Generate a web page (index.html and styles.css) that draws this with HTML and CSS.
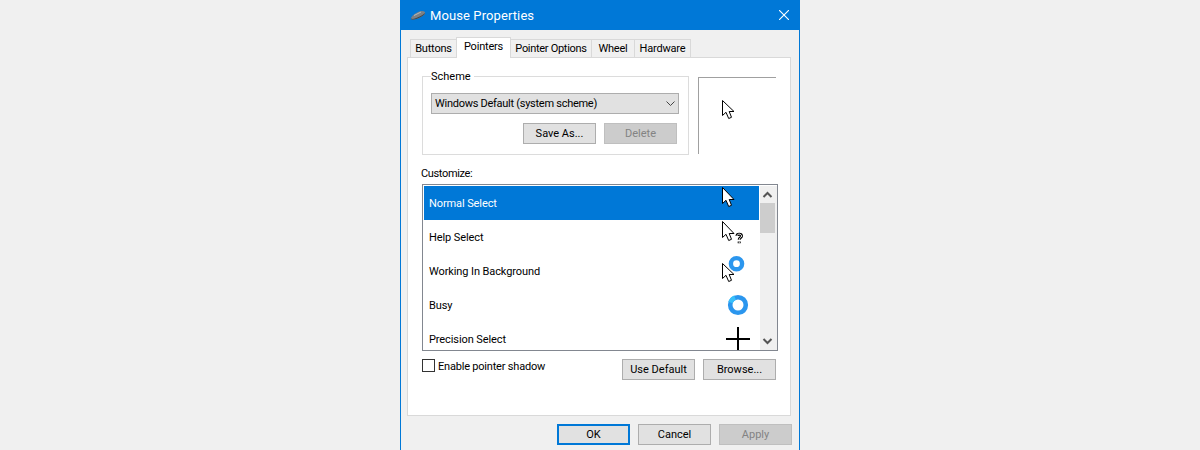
FILE: index.html
```html
<!DOCTYPE html>
<html lang="en">
<head>
<meta charset="utf-8">
<title>Mouse Properties</title>
<link rel="stylesheet" href="styles.css">
</head>
<body>
<div class="window">
  <header class="titlebar">
    <svg class="app-icon" width="16" height="12" viewBox="0 0 16 12"><path d="M1 9.500C1 7 8 2 12 2c2.500 0 3.500 1 3 2.500C14.500 6.500 7 10.500 3.500 10.500 2 10.500 1 10.500 1 9.500Z" fill="#7c8185"/><path d="M1 9.500c1 .5 2.500.5 4 0 4-1.500 8-3.500 10-5.500-.2 2.200-7.500 6.500-11.500 6.500C2 10.500 1 10.500 1 9.500Z" fill="#3f4345"/><path d="M4 6.500 11 3" stroke="#b5b9bc" fill="none"/></svg>
    <span class="title">Mouse Properties</span>
    <svg class="close" width="10" height="10" viewBox="0 0 10 10"><path d="M0 0l10 10M10 0L0 10" stroke="#fff" stroke-width="1.100" fill="none"/></svg>
  </header>
  <div class="content">
    <nav class="tabs">
      <span class="tab tab-buttons">Buttons</span>
      <span class="tab tab-active">Pointers</span>
      <span class="tab tab-options">Pointer Options</span>
      <span class="tab tab-wheel">Wheel</span>
      <span class="tab tab-hardware">Hardware</span>
    </nav>
    <section class="panel">
      <div class="top-row">
        <fieldset class="scheme">
          <legend>Scheme</legend>
          <div class="select">
            <span>Windows Default (system scheme)</span>
            <svg width="9" height="5" viewBox="0 0 9 5"><path d="M.5.5l4 4 4-4" stroke="#444" fill="none"/></svg>
          </div>
          <div class="scheme-actions">
            <span class="btn">Save As...</span>
            <span class="btn btn-disabled">Delete</span>
          </div>
        </fieldset>
        <div class="preview">
          <svg class="row-icon" width="13" height="20" viewBox="0 0 13 20"><path class="arrow" d="M.5.5V15.500L4 12.300 6.700 18.500 9.500 17.300 7.200 11.500H12Z"/></svg>
        </div>
      </div>
      <div class="customize-label">Customize:</div>
      <div class="list">
        <div class="rows">
          <div class="row row-selected">
            <span class="row-label">Normal Select</span>
            <svg class="row-icon" width="36" height="34" viewBox="0 0 36 34"><path class="arrow" d="M.5 1.500V17.500L4 14.300 6.700 20.500 9.500 19.300 7.200 13.500H12Z"/></svg>
          </div>
          <div class="row">
            <span class="row-label">Help Select</span>
            <svg class="row-icon" width="36" height="34" viewBox="0 0 36 34"><path class="arrow" d="M.5 1.500V17.500L4 14.300 6.700 20.500 9.500 19.300 7.200 13.500H12Z"/><path d="M15 16c0-2.500 4.500-2.500 4.500 0 0 1.700-2.300 1.700-2.300 3.800M17.200 21.500v1.800" stroke="#000" stroke-width="3" fill="none"/><path d="M15 16c0-2.500 4.500-2.500 4.500 0 0 1.700-2.300 1.700-2.300 3.800M17.200 21.500v1.800" stroke="#fff" stroke-width="1" fill="none"/></svg>
          </div>
          <div class="row">
            <span class="row-label">Working In Background</span>
            <svg class="row-icon" width="36" height="34" viewBox="0 0 36 34"><path class="arrow" d="M.5 9.500V24.500L4 21.300 6.700 27.500 9.500 26.300 7.200 20.500H12Z"/><circle cx="14.500" cy="9.700" r="5.600" fill="#fff" stroke="#2b96ee" stroke-width="4.400"/></svg>
          </div>
          <div class="row">
            <span class="row-label">Busy</span>
            <svg class="row-icon" width="36" height="34" viewBox="0 0 36 34"><circle cx="16" cy="17" r="7.800" fill="#fff" stroke="#2b96ee" stroke-width="4.600"/><path d="M8.500 14.500a7.800 7.800 0 0 1 4.500-4.800" stroke="#39c0fa" stroke-width="4.600" fill="none"/></svg>
          </div>
          <div class="row">
            <span class="row-label">Precision Select</span>
            <svg class="row-icon" width="36" height="34" viewBox="0 0 36 34"><path d="M4 17h24M16 5v24" stroke="#000" stroke-width="2" fill="none"/></svg>
          </div>
        </div>
        <div class="scrollbar">
          <svg class="sb-arrow" width="17" height="17" viewBox="0 0 17 17"><path d="M3.500 11l4-4 4 4" stroke="#555" stroke-width="2" fill="none"/></svg>
          <div class="sb-thumb"></div>
          <svg class="sb-arrow sb-end" width="17" height="17" viewBox="0 0 17 17"><path d="M3.500 6l4 4 4-4" stroke="#555" stroke-width="2" fill="none"/></svg>
        </div>
      </div>
      <div class="list-footer">
        <label class="check"><span class="box"></span>Enable pointer shadow</label>
        <div class="list-actions">
          <span class="btn">Use Default</span>
          <span class="btn">Browse...</span>
        </div>
      </div>
    </section>
    <footer class="dialog-actions">
      <span class="btn btn-default">OK</span>
      <span class="btn">Cancel</span>
      <span class="btn btn-disabled">Apply</span>
    </footer>
  </div>
</div>
</body>
</html>
```
FILE: styles.css
```css
* { box-sizing: border-box; }
html, body { margin: 0; height: 450px; overflow: hidden; }
body {
  background: #f0f0f0;
  display: flex;
  justify-content: center;
  font-family: Roboto, "Noto Sans", sans-serif;
  font-size: 11px;
  color: #000;
}
.window {
  width: 400px;
  height: 450px;
  border-left: 1px solid #0078d7;
  border-right: 1px solid #0078d7;
  background: #f0f0f0;
  overflow: hidden;
  flex: none;
}
.titlebar {
  height: 30px;
  background: #0078d7;
  display: flex;
  align-items: center;
  padding-left: 9px;
  padding-right: 10px;
  color: #fff;
}
.app-icon { margin-right: 4px; }
.title { font-size: 13px; flex: 1; letter-spacing: .1px; }
.tabs {
  display: flex;
  align-items: flex-end;
  height: 27px;
  padding-left: 8px;
  position: relative;
  z-index: 1;
}
.tab {
  height: 18px;
  border: 1px solid #d9d9d9;
  border-bottom: 0;
  margin-left: -1px;
  background: #f0f0f0;
  display: flex;
  align-items: center;
  justify-content: center;
  white-space: nowrap;
  letter-spacing: -.2px;
}
.tab-buttons { width: 47px; margin-left: 1px; }
.tab-active {
  width: 55px;
  height: 21px;
  background: #fff;
  margin-bottom: -1px;
  padding-bottom: 3px;
}
.tab-options { width: 82px; letter-spacing: -.3px; }
.tab-wheel { width: 44px; }
.tab-hardware { width: 57px; }
.panel {
  margin-left: 6px;
  width: 384px;
  height: 359px;
  background: #fff;
  border: 1px solid #d9d9d9;
  padding: 10px 14px 0 14px;
}
.top-row { display: flex; align-items: flex-start; }
.scheme {
  margin: 0;
  width: 267px;
  height: 87px;
  border: 1px solid #dcdcdc;
  padding: 9px 8px 0 8px;
  min-inline-size: 0;
  flex: none;
}
.scheme legend { padding: 1px 3px 0 0; height: 16px; line-height: 16px; }
.select {
  height: 21px;
  width: 248px;
  background: #e1e1e1;
  border: 1px solid #adadad;
  display: flex;
  align-items: center;
  justify-content: space-between;
  padding: 0 3px 0 3px;
  letter-spacing: -.27px;
}
.scheme-actions {
  display: flex;
  justify-content: flex-end;
  gap: 8px;
  margin-top: 9px;
  padding-right: 3px;
}
.btn {
  width: 73px;
  height: 21px;
  background: #e1e1e1;
  border: 1px solid #adadad;
  display: flex;
  align-items: center;
  justify-content: center;
}
.btn-disabled { background: #cccccc; border-color: #bfbfbf; color: #838383; }
.btn-default { border: 2px solid #0078d7; }
.preview {
  margin-left: 9px;
  margin-top: 9px;
  width: 79px;
  height: 77px;
  border-left: 1px solid #a0a0a0;
  border-top: 1px solid #a0a0a0;
  padding: 22px 0 0 23px;
}
.arrow { fill: #fff; stroke: #000; stroke-width: 1; }
.customize-label { margin-top: 11px; height: 18px; line-height: 16px; margin-left: -1px; letter-spacing: -.35px; }
.list {
  width: 356px;
  height: 167px;
  border: 1px solid #828790;
  padding: 1px 1px 0 1px;
  display: flex;
  overflow: hidden;
}
.rows { width: 335px; flex: none; }
.row {
  height: 34px;
  display: flex;
  align-items: center;
  padding-left: 5px;
}
.row-label { width: 293px; flex: none; letter-spacing: -.1px; }
.row-selected { background: #0078d7; color: #fff; }
.row-icon { flex: none; overflow: visible; display: block; }
.scrollbar {
  width: 17px;
  margin: 0 0 0 1px;
  height: 164px;
  background: #f0f0f0;
  display: flex;
  flex-direction: column;
}
.sb-arrow { flex: none; }
.sb-thumb { width: 15px; height: 30px; background: #cdcdcd; }
.sb-end { margin-top: auto; }
.list-footer {
  display: flex;
  justify-content: space-between;
  width: 354px;
  margin-top: 8px;
}
.check { display: flex; align-items: flex-start; line-height: 15px; gap: 3px; letter-spacing: -.2px; }
.box { width: 13px; height: 13px; border: 1px solid #333; background: #fff; }
.list-actions { display: flex; gap: 8px; }
.dialog-actions {
  display: flex;
  justify-content: flex-end;
  gap: 8px;
  margin-top: 8px;
  padding-right: 7px;
}
```
